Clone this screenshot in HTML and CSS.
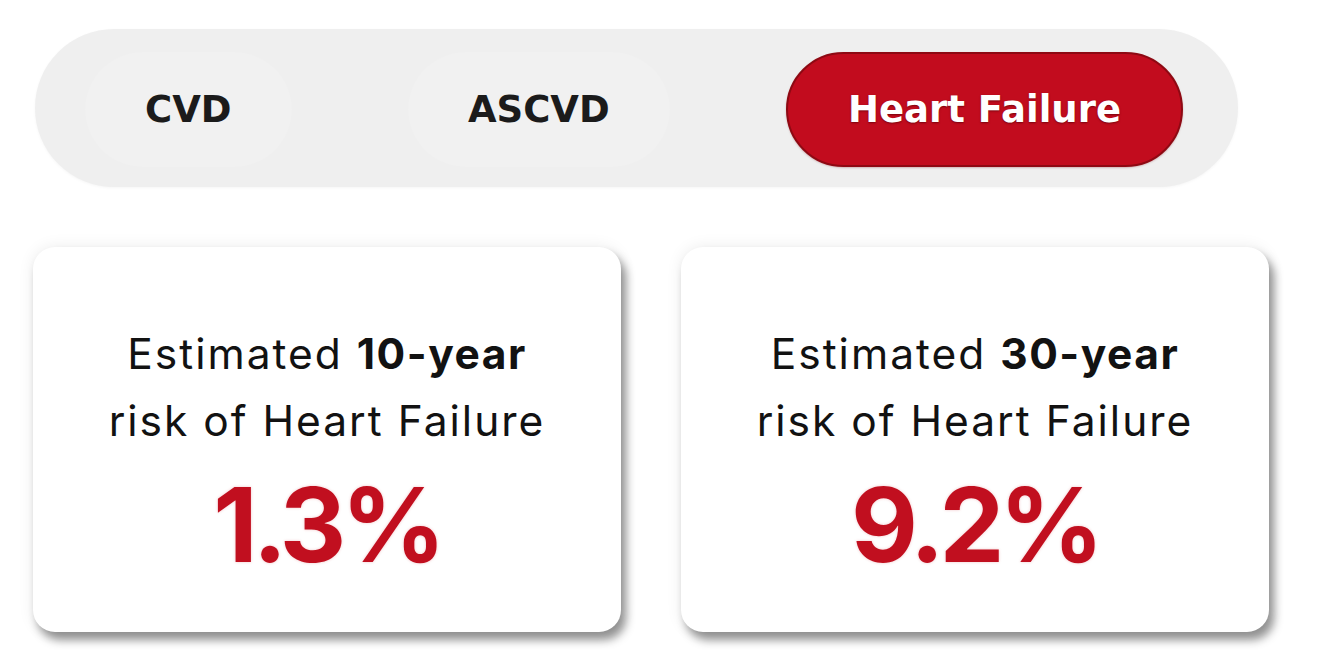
FILE: index.html
```html
<!DOCTYPE html>
<html lang="en">
<head>
<meta charset="utf-8">
<title>Heart Failure Risk</title>
<link rel="stylesheet" href="styles.css">
</head>
<body>
<main class="page">
  <nav class="tabs">
    <button class="tab">CVD</button>
    <button class="tab">ASCVD</button>
    <button class="tab tab-active">Heart Failure</button>
  </nav>
  <section class="cards">
    <article class="card">
      <p class="card-label">Estimated <strong>10-year</strong><br>risk of Heart Failure</p>
      <p class="card-value">1.3%</p>
    </article>
    <article class="card">
      <p class="card-label">Estimated <strong>30-year</strong><br>risk of Heart Failure</p>
      <p class="card-value">9.2%</p>
    </article>
  </section>
</main>
</body>
</html>
```
FILE: styles.css
```css
* { box-sizing: border-box; }
html, body { margin: 0; padding: 0; background: #ffffff; }
body { font-family: "Inter", "Liberation Sans", sans-serif; color: #111; }

.page {
  width: 1326px;
  height: 672px;
  padding: 29px 0 0 33px;
  overflow: hidden;
}

.tabs {
  margin-left: 2px;
  width: 1203px;
  height: 158px;
  padding: 23px 55px 20px 50px;
  background: #efefef;
  border-radius: 79px;
  display: flex;
  justify-content: space-between;
  align-items: stretch;
  box-shadow: 0 1px 3px rgba(0, 0, 0, 0.04);
}

.tab {
  border: none;
  background: rgba(255, 255, 255, 0.12);
  border-radius: 58px;
  padding: 0 60px;
  height: 115px;
  font-family: "DejaVu Sans", "Inter", sans-serif;
  font-weight: 700;
  font-size: 37px;
  color: #1b1b1b;
  cursor: pointer;
}

.tab-active {
  background: #c20c1e;
  border: 2px solid #8e0913;
  color: #fff;
  text-shadow: 0 1px 2px rgba(90, 0, 8, 0.7);
  box-shadow: 0 1px 2px rgba(120, 0, 10, 0.25);
}

.cards {
  margin-top: 60px;
  display: flex;
  gap: 60px;
}

.card {
  width: 588px;
  height: 385px;
  padding: 73px 0 56px;
  background: #fff;
  border-radius: 22px;
  text-align: center;
  box-shadow: 5px 8px 10px rgba(0, 0, 0, 0.42), 0 0 16px rgba(0, 0, 0, 0.08);
}

.card-label {
  margin: 0;
  font-size: 42.5px;
  line-height: 67px;
  font-weight: 400;
  letter-spacing: 2px;
  color: #121212;
}

.card-label strong { font-weight: 700; letter-spacing: 1.5px; }

.card-value {
  margin: 19px 0 0;
  font-size: 103px;
  line-height: 103px;
  font-weight: 700;
  letter-spacing: -5px;
  color: #c10f1f;
  text-shadow: 0 0 3px rgba(200, 20, 30, 0.25);
}
```
